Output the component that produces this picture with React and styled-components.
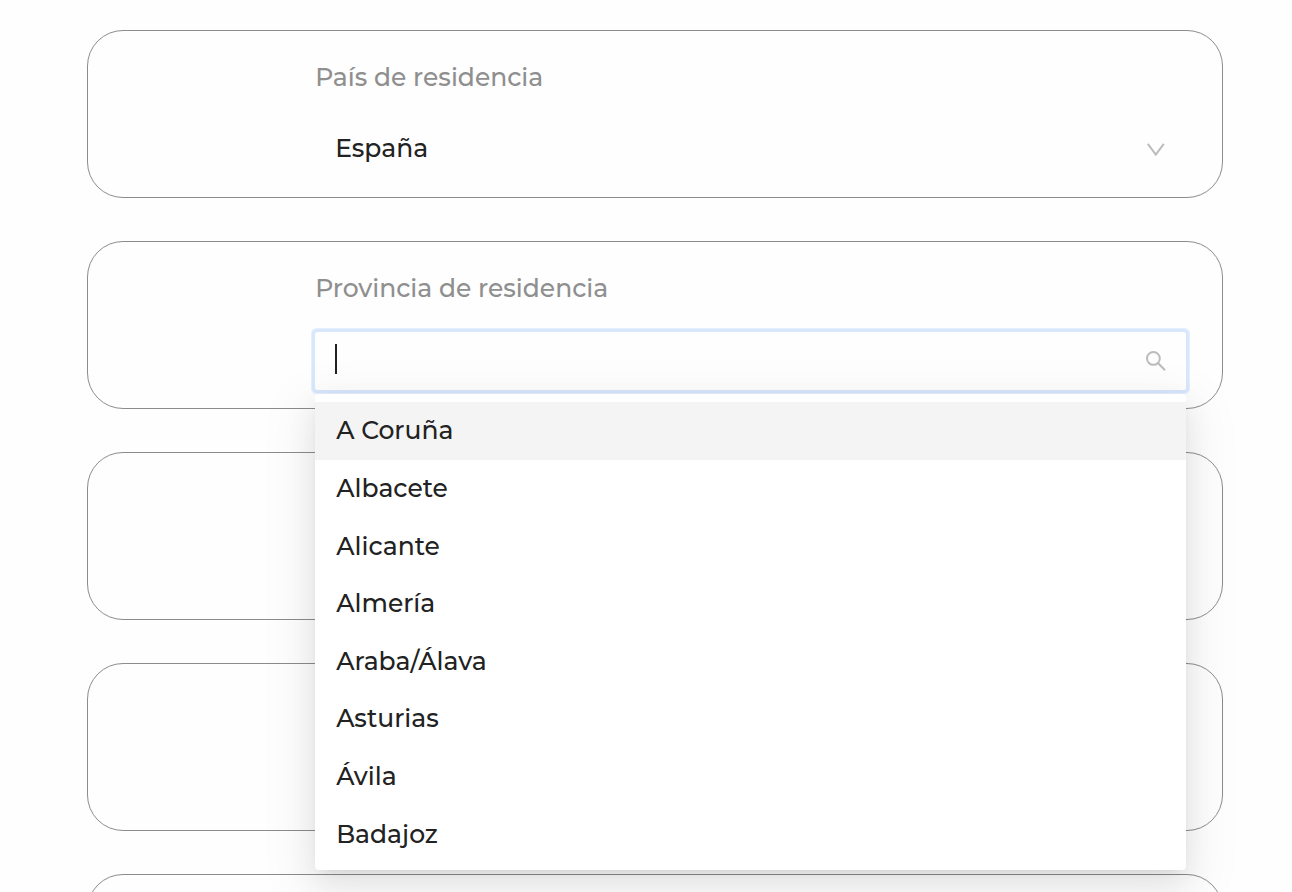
import React, { useState } from "react";
import styled, { createGlobalStyle, css } from "styled-components";

const colors = {
  page: "#fefefe",
  border: "#8c8c8c",
  label: "#8f8f8f",
  text: "#222222",
  icon: "#bcbcbc",
  ring: "#d9e7fd",
  ringSoft: "#e6effe",
  active: "#f4f4f4"
};

const GlobalStyle = createGlobalStyle`
  * {
    box-sizing: border-box;
  }

  body {
    margin: 0;
    background: ${colors.page};
    color: ${colors.text};
    font-family: Montserrat, Inter, sans-serif;
    font-size: 25px;
    font-weight: 500;
    line-height: 32px;
  }
`;

const Form = styled.form`
  display: flex;
  flex-direction: column;
  gap: 43px;
  height: 100vh;
  padding: 30px 69px 0 87px;
  overflow: hidden;
`;

const Card = styled.section`
  flex: none;
  min-height: 168px;
  padding: 30px 36px 15px 20%;
  border: 1px solid ${colors.border};
  border-radius: 36px;
`;

const Label = styled.label`
  display: block;
  margin-bottom: 28px;
  color: ${colors.label};
`;

const Field = styled.div`
  position: relative;
  display: flex;
  align-items: center;
  height: 58px;
  padding: 0 20px;
  border-radius: 2px;

  ${props =>
    props.$focused &&
    css`
      box-shadow: 0 0 0 3px ${colors.ring}, 0 0 0 4px ${colors.ringSoft};
    `};
`;

const controlStyles = css`
  flex: 1;
  min-width: 0;
  height: 100%;
  padding: 0 0 4px;
  border: 0;
  outline: 0;
  background: transparent;
  color: inherit;
  font: inherit;
  appearance: none;
`;

const Select = styled.select`
  ${controlStyles};
  cursor: pointer;
`;

const SearchInput = styled.input`
  ${controlStyles};
  caret-color: transparent;
`;

const Caret = styled.span`
  width: 2px;
  height: 30px;
  margin-bottom: 4px;
  background: ${colors.text};
`;

const Icon = styled.svg`
  flex: none;
  width: 22px;
  height: 22px;
  fill: none;
  stroke: ${colors.icon};
  stroke-width: 2;
  pointer-events: none;
`;

const Dropdown = styled.div`
  position: absolute;
  top: calc(100% + 4px);
  left: 0;
  right: 0;
  z-index: 10;
  padding: 8px 0 7px;
  border-radius: 4px;
  background: #fff;
  box-shadow: 0 5px 11px -7px rgba(0, 0, 0, 0.12), 0 11px 29px 0 rgba(0, 0, 0, 0.08),
    0 16px 50px 14px rgba(0, 0, 0, 0.05);
`;

const OptionList = styled.ul`
  display: flex;
  flex-direction: column;
  height: 461px;
  margin: 0;
  padding: 0;
  list-style: none;
`;

const Option = styled.li`
  display: flex;
  flex: 1;
  align-items: center;
  padding: 0 21px 1px;
  background: ${props => (props.$active ? colors.active : "transparent")};
  cursor: pointer;
`;

const provinces = ["A Coruña", "Albacete", "Alicante", "Almería", "Araba/Álava", "Asturias", "Ávila", "Badajoz"];

const ChevronIcon = () => (
  <Icon viewBox="0 0 22 22" aria-hidden="true">
    <path d="M3.8 4.8 L11.8 15.6 L19.8 4.8" />
  </Icon>
);

const SearchIcon = () => (
  <Icon viewBox="0 0 22 22" aria-hidden="true">
    <circle cx="9.4" cy="8.4" r="6.4" />
    <path d="M14 13 L21 20.2" />
  </Icon>
);

const ProvinceField = () => {
  const [search, setSearch] = useState("");
  const [active, setActive] = useState(0);

  return (
    <Field $focused>
      {search === "" ? <Caret /> : null}
      <SearchInput
        id="province"
        type="text"
        role="combobox"
        aria-expanded="true"
        aria-controls="province-list"
        autoComplete="off"
        value={search}
        onChange={e => setSearch(e.target.value)}
      />
      <SearchIcon />
      <Dropdown>
        <OptionList id="province-list" role="listbox">
          {provinces.map((name, i) => (
            <Option
              key={name}
              role="option"
              aria-selected={i === active}
              $active={i === active}
              onMouseEnter={() => setActive(i)}
              onClick={() => setSearch(name)}
            >
              {name}
            </Option>
          ))}
        </OptionList>
      </Dropdown>
    </Field>
  );
};

const App = () => (
  <>
    <GlobalStyle />
    <Form>
      <Card>
        <Label htmlFor="country">País de residencia</Label>
        <Field>
          <Select id="country" defaultValue="España">
            <option>España</option>
          </Select>
          <ChevronIcon />
        </Field>
      </Card>
      <Card>
        <Label htmlFor="province">Provincia de residencia</Label>
        <ProvinceField />
      </Card>
      <Card />
      <Card />
      <Card />
    </Form>
  </>
);

export default App;
